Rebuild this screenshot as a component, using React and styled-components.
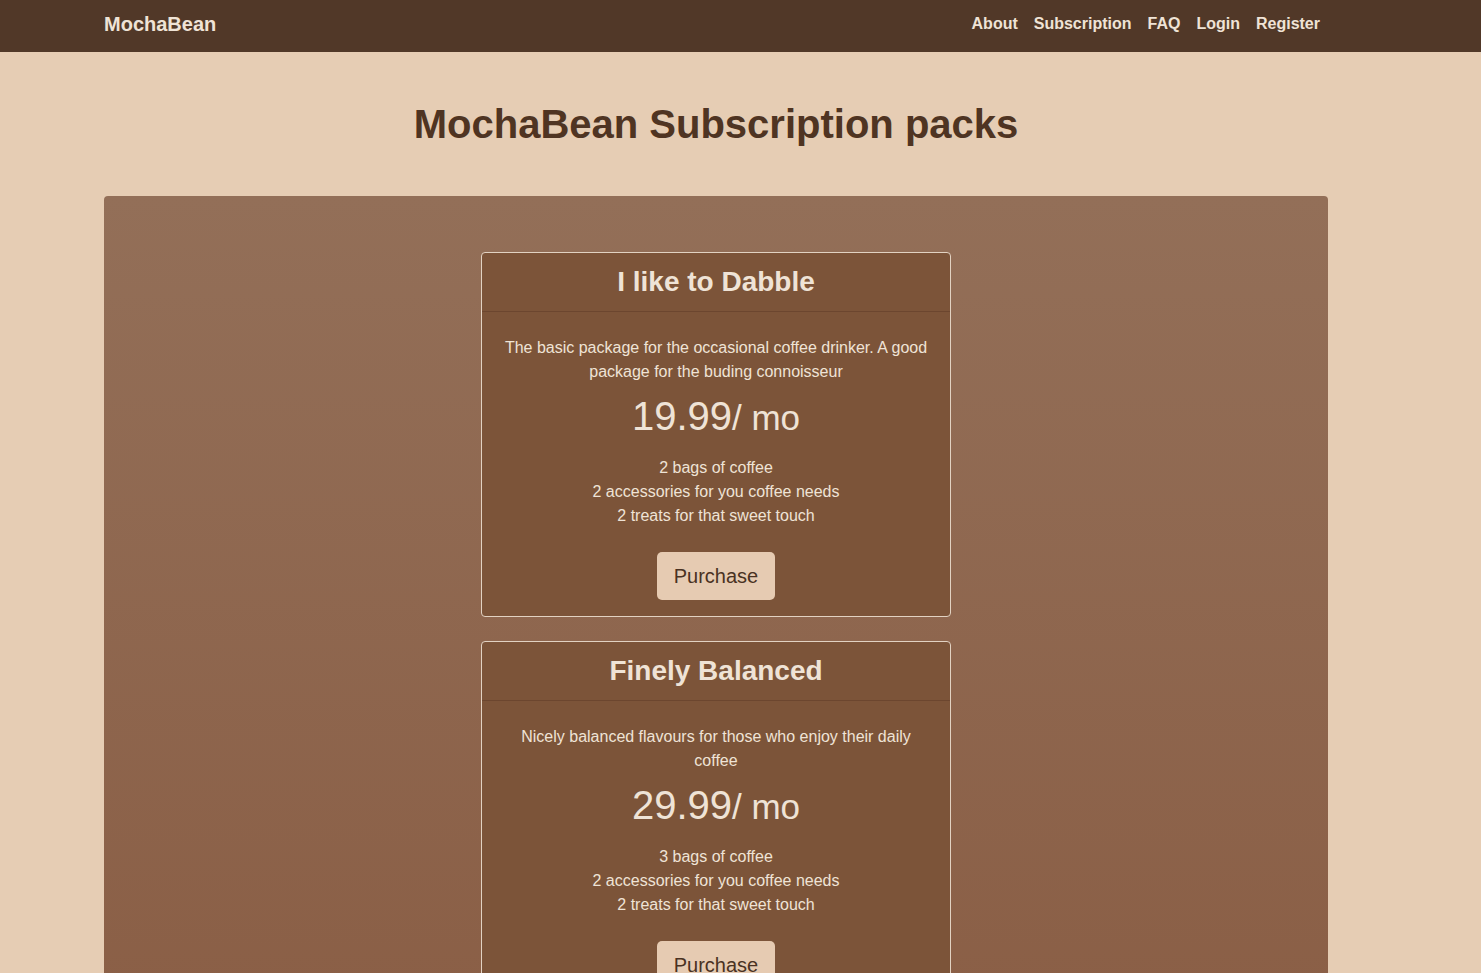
import React from "react";
import styled, { createGlobalStyle } from "styled-components";

const plans = [
  {
    title: "I like to Dabble",
    desc: "The basic package for the occasional coffee drinker. A good package for the buding connoisseur",
    price: "19.99",
    items: ["2 bags of coffee", "2 accessories for you coffee needs", "2 treats for that sweet touch"],
  },
  {
    title: "Finely Balanced",
    desc: "Nicely balanced flavours for those who enjoy their daily coffee",
    price: "29.99",
    items: ["3 bags of coffee", "2 accessories for you coffee needs", "2 treats for that sweet touch"],
  },
];

const links = ["About", "Subscription", "FAQ", "Login", "Register"];

const GlobalStyle = createGlobalStyle`
  * { box-sizing: border-box; }
  body {
    margin: 0;
    background: #e6cdb4;
    font-family: "Liberation Sans", Arial, sans-serif;
    overflow: hidden;
  }
`;

const Nav = styled.nav`
  height: 52px;
  background: #513828;
`;

const NavInner = styled.div`
  width: 1224px;
  margin-left: 104px;
  height: 100%;
  display: flex;
  align-items: center;
  justify-content: space-between;
`;

const Brand = styled.a`
  font-size: 20px;
  font-weight: bold;
  color: #efe3d6;
  margin-top: -4px;
`;

const Links = styled.ul`
  list-style: none;
  margin: 0;
  padding: 0;
  display: flex;
  margin-top: -4px;
`;

const LinkItem = styled.li`
  font-size: 16px;
  font-weight: bold;
  color: #efe3d6;
  padding: 0 8px;
`;

const Title = styled.h1`
  margin: 48px 0 48px;
  width: 1224px;
  margin-left: 104px;
  text-align: center;
  font-size: 40px;
  line-height: 48px;
  font-weight: bold;
  color: #4f3422;
`;

const Panel = styled.section`
  width: 1224px;
  margin-left: 104px;
  min-height: 800px;
  border-radius: 4px 4px 0 0;
  background: linear-gradient(180deg, #936f58 0%, #8a5e45 100%);
  padding: 56px 0 40px;
  display: flex;
  flex-direction: column;
  align-items: center;
  gap: 24px;
`;

const Card = styled.div`
  width: 470px;
  background: #7c5439;
  border: 1px solid #e2d2c2;
  border-radius: 4px;
  text-align: center;
  color: #efe3d6;
`;

const CardHead = styled.div`
  height: 59px;
  display: flex;
  align-items: center;
  justify-content: center;
  border-bottom: 1px solid #6c462f;
  font-size: 28px;
  font-weight: bold;
  color: #efe3d6;
`;

const CardBody = styled.div`
  padding: 24px 20px 16px;
  display: flex;
  flex-direction: column;
  align-items: center;
`;

const Desc = styled.p`
  margin: 0;
  font-size: 16px;
  line-height: 24px;
`;

const Price = styled.div`
  margin-top: 8px;
  font-size: 40px;
  line-height: 48px;
  small {
    font-size: 35px;
    font-weight: 300;
  }
`;

const Features = styled.ul`
  list-style: none;
  margin: 14px 0 0;
  padding: 0;
  font-size: 16px;
  line-height: 24px;
`;

const Button = styled.button`
  margin-top: 24px;
  width: 118px;
  height: 48px;
  border: none;
  border-radius: 5px;
  background: #e6cbb2;
  color: #4a3222;
  font-family: "Liberation Sans", Arial, sans-serif;
  font-size: 20px;
`;

export default function App() {
  return (
    <>
      <GlobalStyle />
      <Nav>
        <NavInner>
          <Brand>MochaBean</Brand>
          <Links>
            {links.map((l) => (
              <LinkItem key={l}>{l}</LinkItem>
            ))}
          </Links>
        </NavInner>
      </Nav>
      <Title>MochaBean Subscription packs</Title>
      <Panel>
        {plans.map((p) => (
          <Card key={p.title}>
            <CardHead>{p.title}</CardHead>
            <CardBody>
              <Desc>{p.desc}</Desc>
              <Price>
                {p.price}
                <small>/ mo</small>
              </Price>
              <Features>
                {p.items.map((i) => (
                  <li key={i}>{i}</li>
                ))}
              </Features>
              <Button>Purchase</Button>
            </CardBody>
          </Card>
        ))}
      </Panel>
    </>
  );
}
